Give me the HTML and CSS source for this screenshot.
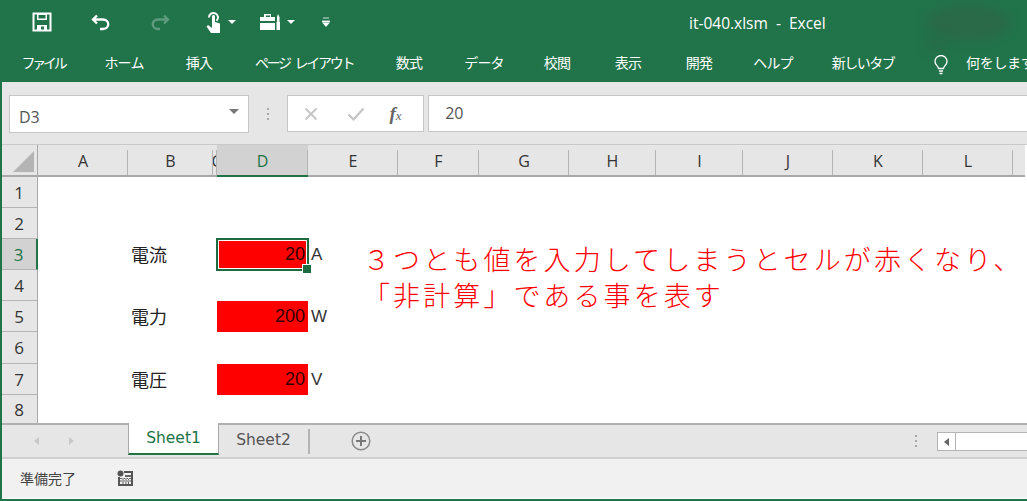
FILE: index.html
```html
<!DOCTYPE html>
<html lang="ja">
<head>
    <meta charset="UTF-8">
    <title>it-040.xlsm - Excel</title>
    <link rel="stylesheet" href="styles.css">
</head>
<body>
<div class="window">
    <div class="ribbon">
        <div class="blob"></div>
        <div class="blob blob-tail"></div>
        <div class="titlebar">
            <div class="qat">
                <svg class="qat-save" width="20" height="20" viewBox="0 0 20 20"><path d="M1.500 1.500H18.500V18.500H1.500Z" fill="none" stroke="#fff" stroke-width="2"/><path d="M5 2H15V8H5ZM5 13H15V18H12V14.500H9V18H5Z" fill="#fff"/><path d="M6.500 3H13.500V6.500H6.500Z" fill="#21734a"/></svg>
                <svg class="qat-undo" width="20" height="18" viewBox="0 0 20 18"><path d="M6 2.500 2 6.500 6 10.500M2.500 6.500H12C19 6.500 19 16 12 16H9" fill="none" stroke="#fff" stroke-width="2.300"/></svg>
                <svg class="qat-redo" width="20" height="18" viewBox="0 0 20 18"><path d="M14 2.500 18 6.500 14 10.500M17.500 6.500H8C1 6.500 1 16 8 16H10" fill="none" stroke="#5f9c7f" stroke-width="2.300"/></svg>
                <svg class="qat-touch" width="16" height="22" viewBox="0 0 16 22"><path d="M3 6.500a4.500 4.500 0 1 1 7.500 3.300" fill="none" stroke="#fff" stroke-width="2"/><path d="M6 5.500c0-2 3-2 3 0V11l5 1.500V22H5L.5 15.500l1.500-1.500 4 3Z" fill="#fff"/></svg>
                <span class="caret qat-caret1"></span>
                <svg class="qat-tools" width="22" height="18" viewBox="0 0 22 18"><path d="M5 1H11V4H15V8H0V4H4V1ZM6 2.500V4H10V2.500ZM0 10H15V17H0Z" fill="#fff"/><path d="M18 1l1.500 3V9H20V17H16.500V9H17V4Z" fill="#fff"/></svg>
                <span class="caret qat-caret2"></span>
                <svg class="qat-more" width="8" height="10" viewBox="0 0 8 10"><path d="M1 1H7M0 4H8V5H0ZM1 6H7L4 9.500Z" fill="#fff" stroke="#fff" stroke-width=".8"/></svg>
            </div>
            <div class="doc-title">it-040.xlsm&nbsp; - &nbsp;Excel</div>
        </div>
        <div class="menu">
            <span class="tab t1">ファイル</span>
            <span class="tab t2">ホーム</span>
            <span class="tab t3">挿入</span>
            <span class="tab t4">ページ レイアウト</span>
            <span class="tab t5">数式</span>
            <span class="tab t6">データ</span>
            <span class="tab t7">校閲</span>
            <span class="tab t8">表示</span>
            <span class="tab t9">開発</span>
            <span class="tab t10">ヘルプ</span>
            <span class="tab t11">新しいタブ</span>
            <svg class="bulb" width="14" height="20" viewBox="0 0 14 20"><path d="M4.500 13.500C4 10.500 1 10 1 6.500a6 6 0 0 1 12 0c0 3.500-3 4-3.500 7ZM5 16H9M5.500 18.500H8.500" fill="none" stroke="#fff" stroke-width="1.300"/></svg>
            <span class="tell">何をします</span>
        </div>
    </div>

    <div class="formula-row">
        <div class="name-box">
            <span>D3</span>
            <i class="name-caret"></i>
        </div>
        <div class="dots"><i></i><i></i><i></i></div>
        <div class="fx-box">
            <svg width="14" height="14" viewBox="0 0 14 14"><path d="M1.500 1.500 12.500 12.500M12.500 1.500 1.500 12.500" stroke="#c4c4c4" stroke-width="1.800"/></svg>
            <svg width="18" height="14" viewBox="0 0 18 14"><path d="M1.500 7.500 6.500 12.500 16.500 1.500" fill="none" stroke="#c4c4c4" stroke-width="2.200"/></svg>
            <span class="fx"><b>f</b><small>x</small></span>
        </div>
        <div class="formula-input">20</div>
    </div>

    <div class="sheet">
        <div class="corner"><span></span></div>
        <div class="col">A</div>
        <div class="col">B</div>
        <div class="col col-c"><span>C</span></div>
        <div class="col col-on">D</div>
        <div class="col">E</div>
        <div class="col">F</div>
        <div class="col">G</div>
        <div class="col">H</div>
        <div class="col">I</div>
        <div class="col">J</div>
        <div class="col">K</div>
        <div class="col">L</div>
        <div class="col col-end"></div>

        <div class="row r1">1</div>
        <div class="row r2">2</div>
        <div class="row row-on r3">3</div>
        <div class="row r4">4</div>
        <div class="row r5">5</div>
        <div class="row r6">6</div>
        <div class="row r7">7</div>
        <div class="row r8">8</div>

        <div class="label r3">電流</div>
        <div class="num r3 active">20</div>
        <div class="unit r3">A</div>
        <div class="label r5">電力</div>
        <div class="num r5">200</div>
        <div class="unit r5">W</div>
        <div class="label r7">電圧</div>
        <div class="num r7">20</div>
        <div class="unit r7">V</div>

        <div class="note">３つとも値を入力してしまうとセルが赤くなり、<br>「非計算」である事を表す</div>
    </div>

    <div class="tabs">
        <div class="tab-nav">
            <i class="tri-left"></i>
            <i class="tri-right"></i>
        </div>
        <div class="sheet-tab on">Sheet1</div>
        <div class="sheet-tab">Sheet2</div>
        <div class="tab-sep"></div>
        <svg class="plus" width="20" height="20" viewBox="0 0 20 20"><circle cx="10" cy="10" r="8.800" fill="none" stroke="#8a8a8a" stroke-width="1.500"/><path d="M10 5V15M5 10H15" stroke="#777" stroke-width="2"/></svg>
        <div class="dots tab-dots"><i></i><i></i><i></i></div>
        <div class="scroll">
            <div class="scroll-btn"><i class="tri-left dark"></i></div>
            <div class="scroll-track"></div>
        </div>
    </div>

    <div class="status">
        <span>準備完了</span>
        <svg width="16" height="16" viewBox="0 0 16 16"><circle cx="3.500" cy="3.500" r="3" fill="#555"/><path d="M7 1H16V16H1V7H3V14H14V3H7Z" fill="#555"/><path d="M8 5H14V7H8ZM3 8H14V9H3ZM3 10.500H14V11.500H3ZM5.500 8V14H6.500V8ZM8.500 8V14H9.500V8ZM11 8V14H12V8Z" fill="#666"/></svg>
    </div>
</div>
</body>
</html>
```

FILE: styles.css
```css
* {
    box-sizing: border-box;
}
html, body {
    margin: 0;
    padding: 0;
    background: #fff;
}
body {
    width: 1027px;
    height: 501px;
    overflow: hidden;
    font-family: "Noto Sans CJK JP", "Liberation Sans", sans-serif;
}
.window {
    width: 1027px;
    height: 501px;
    display: flex;
    flex-direction: column;
    border-left: 2px solid #21734a;
    border-bottom: 2px solid #21734a;
    background: #fff;
}

/* ribbon */
.ribbon {
    position: relative;
    height: 82px;
    margin-left: -2px;
    background: #21734a;
    color: #fff;
    overflow: hidden;
    flex: none;
}
.blob {
    position: absolute;
    left: 926px;
    top: 5px;
    width: 84px;
    height: 36px;
    border-radius: 50%;
    background: #2a6a49;
    filter: blur(5px);
}
.blob-tail {
    left: 925px;
    top: 36px;
    width: 24px;
    height: 14px;
    background: #256d48;
}
.titlebar {
    position: relative;
    height: 44px;
    display: flex;
    align-items: center;
}
.qat {
    display: flex;
    align-items: center;
    width: 689px;
    height: 44px;
    flex: none;
}
.qat svg, .qat .caret {
    flex: none;
}
.qat-save { margin-left: 32px; }
.qat-undo { margin-left: 39px; }
.qat-redo { margin-left: 39px; }
.qat-touch { margin-left: 36px; }
.qat-caret1 { margin-left: 6px; }
.qat-tools { margin-left: 24px; }
.qat-caret2 { margin-left: 5px; }
.qat-more { margin-left: 27px; }
.caret {
    width: 0;
    height: 0;
    border-left: 4px solid transparent;
    border-right: 4px solid transparent;
    border-top: 4px solid #fff;
}
.doc-title {
    font-family: "Open Sans", "Liberation Sans", sans-serif;
    font-size: 15.500px;
    white-space: nowrap;
    position: relative;
    top: 1px;
}
.menu {
    position: relative;
    height: 38px;
    display: flex;
    align-items: flex-start;
    font-size: 14px;
    white-space: nowrap;
}
.tab {
    position: absolute;
    top: 8px;
    line-height: 20px;
    transform: translateX(-50%);
    letter-spacing: -0.8px;
}
.t1 { left: 43px; letter-spacing: -3.300px; }
.t2 { left: 124px; }
.t3 { left: 199px; }
.t4 { left: 304px; letter-spacing: -2.300px; word-spacing: 4px; }
.t5 { left: 409px; }
.t6 { left: 484px; }
.t7 { left: 557px; }
.t8 { left: 628px; }
.t9 { left: 699px; }
.t10 { left: 773px; }
.t11 { left: 863px; letter-spacing: -1.500px; }
.bulb {
    position: absolute;
    left: 934px;
    top: 11px;
}
.tell {
    position: absolute;
    left: 966px;
    top: 8px;
    line-height: 20px;
    letter-spacing: -0.3px;
}

/* formula bar */
.formula-row {
    height: 63px;
    flex: none;
    background: #e6e6e6;
    display: flex;
    align-items: flex-start;
    padding: 13px 0 0 7px;
    border-bottom: 1px solid #c9c9c9;
}
.name-box {
    width: 240px;
    height: 38px;
    background: #fff;
    border: 1px solid #c6c6c6;
    display: flex;
    align-items: center;
    justify-content: space-between;
    padding: 5px 9px 0 9px;
    font-family: "Open Sans", "Liberation Sans", sans-serif;
    font-size: 16px;
    color: #555;
}
.name-caret {
    width: 0;
    height: 0;
    margin-top: -10px;
    border-left: 5px solid transparent;
    border-right: 5px solid transparent;
    border-top: 5px solid #777;
}
.dots {
    width: 39px;
    height: 38px;
    display: flex;
    flex-direction: column;
    align-items: center;
    justify-content: center;
    gap: 3px;
}
.dots i {
    width: 2px;
    height: 2px;
    background: #a8a8a8;
}
.fx-box {
    width: 137px;
    height: 37px;
    background: #fff;
    border: 1px solid #c6c6c6;
    display: flex;
    align-items: center;
    gap: 29px;
    padding-left: 16px;
}
.fx {
    font-family: "Liberation Serif", serif;
    font-style: italic;
    font-size: 19px;
    color: #666;
    margin-left: -5px;
}
.fx small {
    font-size: 13px;
}
.formula-input {
    width: 600px;
    height: 37px;
    margin-left: 4px;
    background: #fff;
    border: 1px solid #c6c6c6;
    border-right: 0;
    padding: 6px 0 0 16px;
    font-family: "Open Sans", "Liberation Sans", sans-serif;
    font-size: 16px;
    line-height: 22px;
    color: #555;
}

/* sheet */
.sheet {
    position: relative;
    height: 278px;
    flex: none;
    display: grid;
    grid-template-columns: 36px 90px 85px 4px 91px 90px 81px 90px 87px 87px 90px 90px 90px 12px;
    grid-template-rows: 32px 31px 31px 31px 31px 31px 32px 31px 28px;
    font-family: "Open Sans", "Liberation Sans", sans-serif;
    font-size: 16px;
    color: #333;
}
.col {
    grid-row: 1;
    background: #e6e6e6;
    border-bottom: 2px solid #a9a9a9;
    display: flex;
    align-items: center;
    justify-content: center;
    position: relative;
    overflow: hidden;
    padding-top: 1px;
}
.col::after {
    content: "";
    position: absolute;
    right: 0;
    top: 5px;
    bottom: 0;
    width: 1px;
    background: #b4b4b4;
}
.col-c span {
    margin-left: 3px;
}
.col-on {
    background: #d2d2d2;
    border-bottom: 2px solid #217346;
    color: #217346;
}
.col-end::after {
    display: none;
}
.corner {
    grid-row: 1;
    grid-column: 1;
    background: #e6e6e6;
    border-bottom: 2px solid #a9a9a9;
    border-right: 1px solid #a9a9a9;
    position: relative;
}
.corner span {
    position: absolute;
    right: 3px;
    bottom: 3px;
    width: 0;
    height: 0;
    border-left: 21px solid transparent;
    border-bottom: 21px solid #b4b4b4;
}
.row {
    grid-column: 1;
    background: #e6e6e6;
    border-right: 1px solid #a9a9a9;
    border-bottom: 1px solid #b4b4b4;
    display: flex;
    align-items: center;
    justify-content: center;
    font-size: 17px;
    padding-right: 1px;
}
.row-on {
    background: #d2d2d2;
    border-right: 2px solid #217346;
    color: #217346;
}
.r1 { grid-row: 2; }
.r2 { grid-row: 3; }
.r3 { grid-row: 4; }
.r4 { grid-row: 5; }
.r5 { grid-row: 6; }
.r6 { grid-row: 7; }
.r7 { grid-row: 8; }
.r8 { grid-row: 9; border-bottom: 0; }
.label {
    grid-column: 3;
    font-family: "Noto Sans CJK JP", sans-serif;
    font-size: 18px;
    padding: 0 0 2px 3px;
    display: flex;
    align-items: center;
    white-space: nowrap;
    color: #222;
}
.num {
    grid-column: 5;
    background: #f00;
    color: #300;
    font-family: "Liberation Sans", sans-serif;
    font-size: 18px;
    text-align: right;
    padding-right: 3px;
    line-height: 31px;
}
.active {
    position: relative;
    outline: 2px solid #1d6b41;
    outline-offset: -1px;
    box-shadow: inset 0 0 0 2px #fff;
}
.active::after {
    content: "";
    position: absolute;
    right: -4px;
    bottom: -4px;
    width: 8px;
    height: 8px;
    background: #1d6b41;
    border: 1px solid #fff;
}
.unit {
    grid-column: 6;
    font-family: "Liberation Sans", sans-serif;
    font-size: 17px;
    padding-left: 3px;
    line-height: 31px;
    color: #333;
}
.note {
    position: absolute;
    left: 361px;
    top: 96px;
    font-family: "Noto Sans CJK JP", sans-serif;
    font-weight: 300;
    font-size: 27px;
    line-height: 36px;
    letter-spacing: 3.100px;
    color: #f00;
    white-space: nowrap;
}

/* tabs */
.tabs {
    position: relative;
    height: 36px;
    flex: none;
    background: #e6e6e6;
    border-top: 2px solid #b0b0b0;
    border-bottom: 2px solid #d0d0d0;
    display: flex;
    align-items: flex-start;
    font-family: "DejaVu Sans", sans-serif;
    font-size: 15.500px;
}
.tab-nav {
    width: 126px;
    height: 32px;
    display: flex;
    align-items: center;
    gap: 30px;
    padding-left: 32px;
    flex: none;
}
.tri-left {
    width: 0;
    height: 0;
    border-top: 4px solid transparent;
    border-bottom: 4px solid transparent;
    border-right: 5px solid #c8c8c8;
}
.tri-right {
    width: 0;
    height: 0;
    border-top: 4px solid transparent;
    border-bottom: 4px solid transparent;
    border-left: 5px solid #c8c8c8;
}
.tri-left.dark {
    border-right-color: #666;
}
.sheet-tab {
    width: 89px;
    height: 30px;
    display: flex;
    align-items: center;
    justify-content: center;
    color: #555;
    flex: none;
}
.sheet-tab.on {
    width: 91px;
    margin-top: -2px;
    height: 32px;
    background: #fff;
    color: #217346;
    border-left: 1px solid #a9a9a9;
    border-right: 1px solid #a9a9a9;
    border-bottom: 2px solid #217346;
}
.tab-sep {
    width: 2px;
    height: 25px;
    margin-top: 4px;
    background: #b4b4b4;
    flex: none;
}
.plus {
    margin: 6px 0 0 41px;
    flex: none;
}
.tab-dots {
    width: 6px;
    height: 32px;
    margin-left: 542px;
    flex: none;
}
.scroll {
    display: flex;
    height: 19px;
    margin: 7px 0 0 18px;
    flex: 1;
}
.scroll-btn {
    width: 19px;
    background: #fff;
    border: 1px solid #b4b4b4;
    display: flex;
    align-items: center;
    justify-content: center;
    flex: none;
}
.scroll-track {
    flex: 1;
    background: #fff;
    border: 1px solid #b4b4b4;
    border-left: 0;
    border-right: 0;
}

/* status bar */
.status {
    flex: 1;
    background: #f1f1f1;
    display: flex;
    align-items: center;
    gap: 41px;
    padding: 0 0 2px 18px;
    font-size: 14px;
    color: #444;
    border-bottom: 1px solid #fff;
}
```
